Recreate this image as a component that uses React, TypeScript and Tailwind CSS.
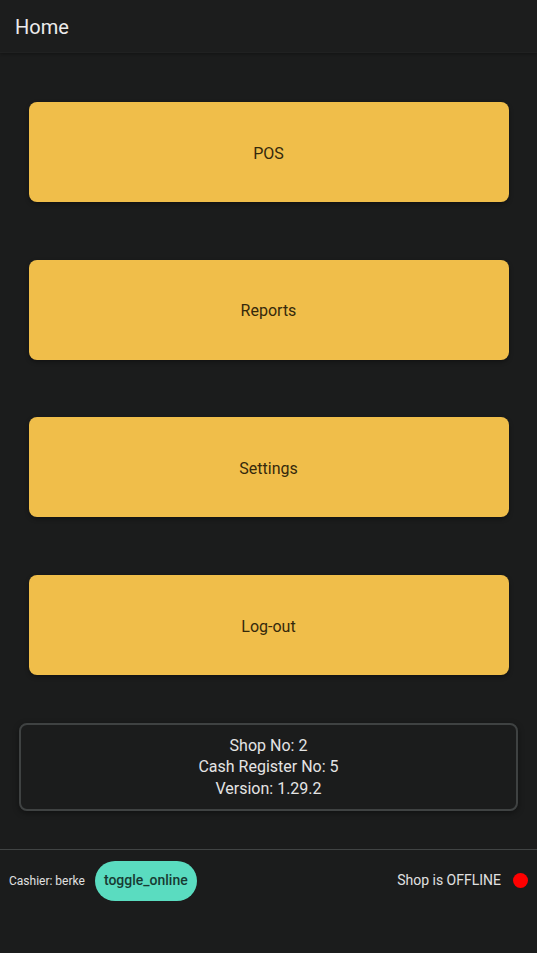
export default function App() {
  const items = ["POS", "Reports", "Settings", "Log-out"];
  return (
    <div className="w-[537px] h-[953px] bg-[#1b1c1c] text-[#e6e6e6] flex flex-col" style={{ fontFamily: "Roboto, 'Liberation Sans', sans-serif" }}>
      <header className="h-[53px] shrink-0 bg-[#1c1d1d] border-b border-[#202121] flex items-center px-[15px] pt-[2px] shadow-[0_1px_3px_rgba(0,0,0,0.3)]">
        <h1 className="text-[20px] text-[#ececec]">Home</h1>
      </header>
      <main className="flex flex-col items-center pt-[49px]">
        <div className="flex flex-col gap-[57.7px]">
          {items.map((label) => (
            <button
              key={label}
              className="w-[480px] h-[100px] rounded-[8px] bg-[#f0be4a] text-[#35290c] text-[16px] pt-[3px] shadow-[0_2px_4px_rgba(0,0,0,0.35)]"
            >
              {label}
            </button>
          ))}
        </div>
        <div className="mt-[48px] w-[499px] h-[88px] rounded-[8px] border-2 border-[#3f4242] flex flex-col items-center justify-center text-[16px] leading-[21.5px] text-[#e4e4e4] shadow-[0_2px_6px_rgba(0,0,0,0.4)]">
          <span>Shop No: 2</span>
          <span>Cash Register No: 5</span>
          <span>Version: 1.29.2</span>
        </div>
      </main>
      <footer className="mt-[38px] border-t border-[#414444] h-[62px] flex items-center pl-[9px] pr-[9px]">
        <span className="text-[12px] text-[#e0e0e0]">Cashier: berke</span>
        <button className="ml-[10px] h-[40px] px-[9px] rounded-full bg-[#5adcc0] text-[#173a33] text-[14px] font-medium">toggle_online</button>
        <span className="ml-auto text-[14px] text-[#e0e0e0]">Shop is OFFLINE</span>
        <span className="ml-[12px] w-[15px] h-[15px] rounded-full bg-[#ff0000]" />
      </footer>
    </div>
  );
}
